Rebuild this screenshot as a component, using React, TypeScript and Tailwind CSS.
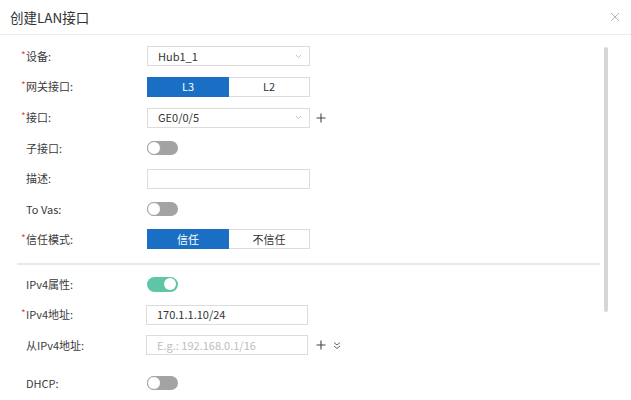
import React from "react";

const font = "font-['Noto_Sans_CJK_SC','Noto_Sans',sans-serif]";

function Label({ text, required }: { text: string; required?: boolean }) {
  return (
    <div className="relative w-[127px] shrink-0 pl-[6px] text-[11px] text-[#3a3a3a]">
      {required && <span className="absolute left-[1px] top-[-1px] text-[10px] text-[#e5484d]">*</span>}
      {text}
    </div>
  );
}

function Toggle({ on }: { on?: boolean }) {
  return on ? (
    <div className="flex h-[15px] w-[31px] items-center justify-end rounded-full bg-[#5ec6a6] pr-[2px]">
      <div className="h-[12px] w-[12px] rounded-full bg-white" />
    </div>
  ) : (
    <div className="flex h-[14px] w-[31px] items-center rounded-full bg-[#a3a3a3]">
      <div className="h-[14px] w-[14px] rounded-full border border-[#a3a3a3] bg-white" />
    </div>
  );
}

function Chevron() {
  return (
    <svg width="7" height="5" viewBox="0 0 7 5" className="text-[#c4c4c4]">
      <path d="M1 1l2.5 2.5L6 1" fill="none" stroke="currentColor" strokeWidth="1" />
    </svg>
  );
}

function Plus() {
  return (
    <svg width="10" height="10" viewBox="0 0 10 10" className="text-[#444]">
      <path d="M5 0.5v9M0.5 5h9" stroke="currentColor" strokeWidth="1.1" />
    </svg>
  );
}

function Select({ value }: { value: string }) {
  return (
    <div className="flex h-[20px] w-[163px] items-center justify-between border border-[#dcdcdc] pl-[10px] pr-[7px] text-[11px] text-[#333]">
      <span>{value}</span>
      <Chevron />
    </div>
  );
}

function Segmented({ a, b }: { a: string; b: string }) {
  return (
    <div className="flex h-[20px] w-[163px] text-[11px]">
      <div className="flex w-[82px] items-center justify-center bg-[#1a6fc4] text-white">{a}</div>
      <div className="flex flex-1 items-center justify-center border border-l-0 border-[#dcdcdc] text-[#333]">{b}</div>
    </div>
  );
}

function Row({ h, children }: { h: string; children: React.ReactNode }) {
  return <div className={`flex items-center ${h}`}>{children}</div>;
}

export default function App() {
  return (
    <div className={`relative h-[400px] w-[631px] overflow-hidden bg-white ${font}`}>
      <div className="flex h-[35px] items-center justify-between border-b border-[#ececec] pl-[10px] pr-[11px]">
        <span className="text-[13.5px] text-[#333]">创建LAN接口</span>
        <svg width="10" height="10" viewBox="0 0 10 10" className="text-[#b5b5b5]">
          <path d="M1 1l8 8M9 1l-8 8" stroke="currentColor" strokeWidth="1" />
        </svg>
      </div>

      <div className="flex">
        <div className="w-[600px] pl-[20px] pt-[6px]">
          <Row h="h-[30px]">
            <Label text="设备:" required />
            <Select value="Hub1_1" />
          </Row>
          <Row h="h-[31px]">
            <Label text="网关接口:" required />
            <Segmented a="L3" b="L2" />
          </Row>
          <Row h="h-[31px]">
            <Label text="接口:" required />
            <Select value="GE0/0/5" />
            <div className="ml-[6px] flex items-center"><Plus /></div>
          </Row>
          <Row h="h-[30px]">
            <Label text="子接口:" />
            <Toggle />
          </Row>
          <Row h="h-[31px]">
            <Label text="描述:" />
            <div className="h-[20px] w-[163px] border border-[#dcdcdc]" />
          </Row>
          <Row h="h-[30px]">
            <Label text="To Vas:" />
            <Toggle />
          </Row>
          <Row h="h-[30px]">
            <Label text="信任模式:" required />
            <Segmented a="信任" b="不信任" />
          </Row>

          <div className="ml-[-3px] mt-[9px] h-[2px] w-[583px] bg-[#e9e9e9]" />

          <div className="pt-[4px]">
            <Row h="h-[30px]">
              <Label text="IPv4属性:" />
              <Toggle on />
            </Row>
            <Row h="h-[31px]">
              <Label text="IPv4地址:" required />
              <div className="-ml-[1px] flex h-[20px] w-[162px] items-center border border-[#dcdcdc] pl-[10px] text-[11px] text-[#333]">
                170.1.1.10/24
              </div>
            </Row>
            <Row h="h-[30px]">
              <Label text="从IPv4地址:" />
              <div className="-ml-[1px] flex h-[20px] w-[162px] items-center border border-[#dcdcdc] pl-[10px] text-[11px] text-[#bdbdbd]">
                E.g.: 192.168.0.1/16
              </div>
              <div className="ml-[8px] flex items-center"><Plus /></div>
              <svg width="8" height="9" viewBox="0 0 8 9" className="ml-[7px] text-[#666]">
                <path d="M1 1.5l3 2.5 3-2.5M1 5l3 2.5 3-2.5" fill="none" stroke="currentColor" strokeWidth="1" />
              </svg>
            </Row>
            <div className="h-[8px]" />
            <Row h="h-[30px]">
              <Label text="DHCP:" />
              <Toggle />
            </Row>
          </div>
        </div>
        <div className="ml-[4px] mt-[12px] h-[265px] w-[4px] rounded-full bg-[#d6d6d6]" />
      </div>
    </div>
  );
}
